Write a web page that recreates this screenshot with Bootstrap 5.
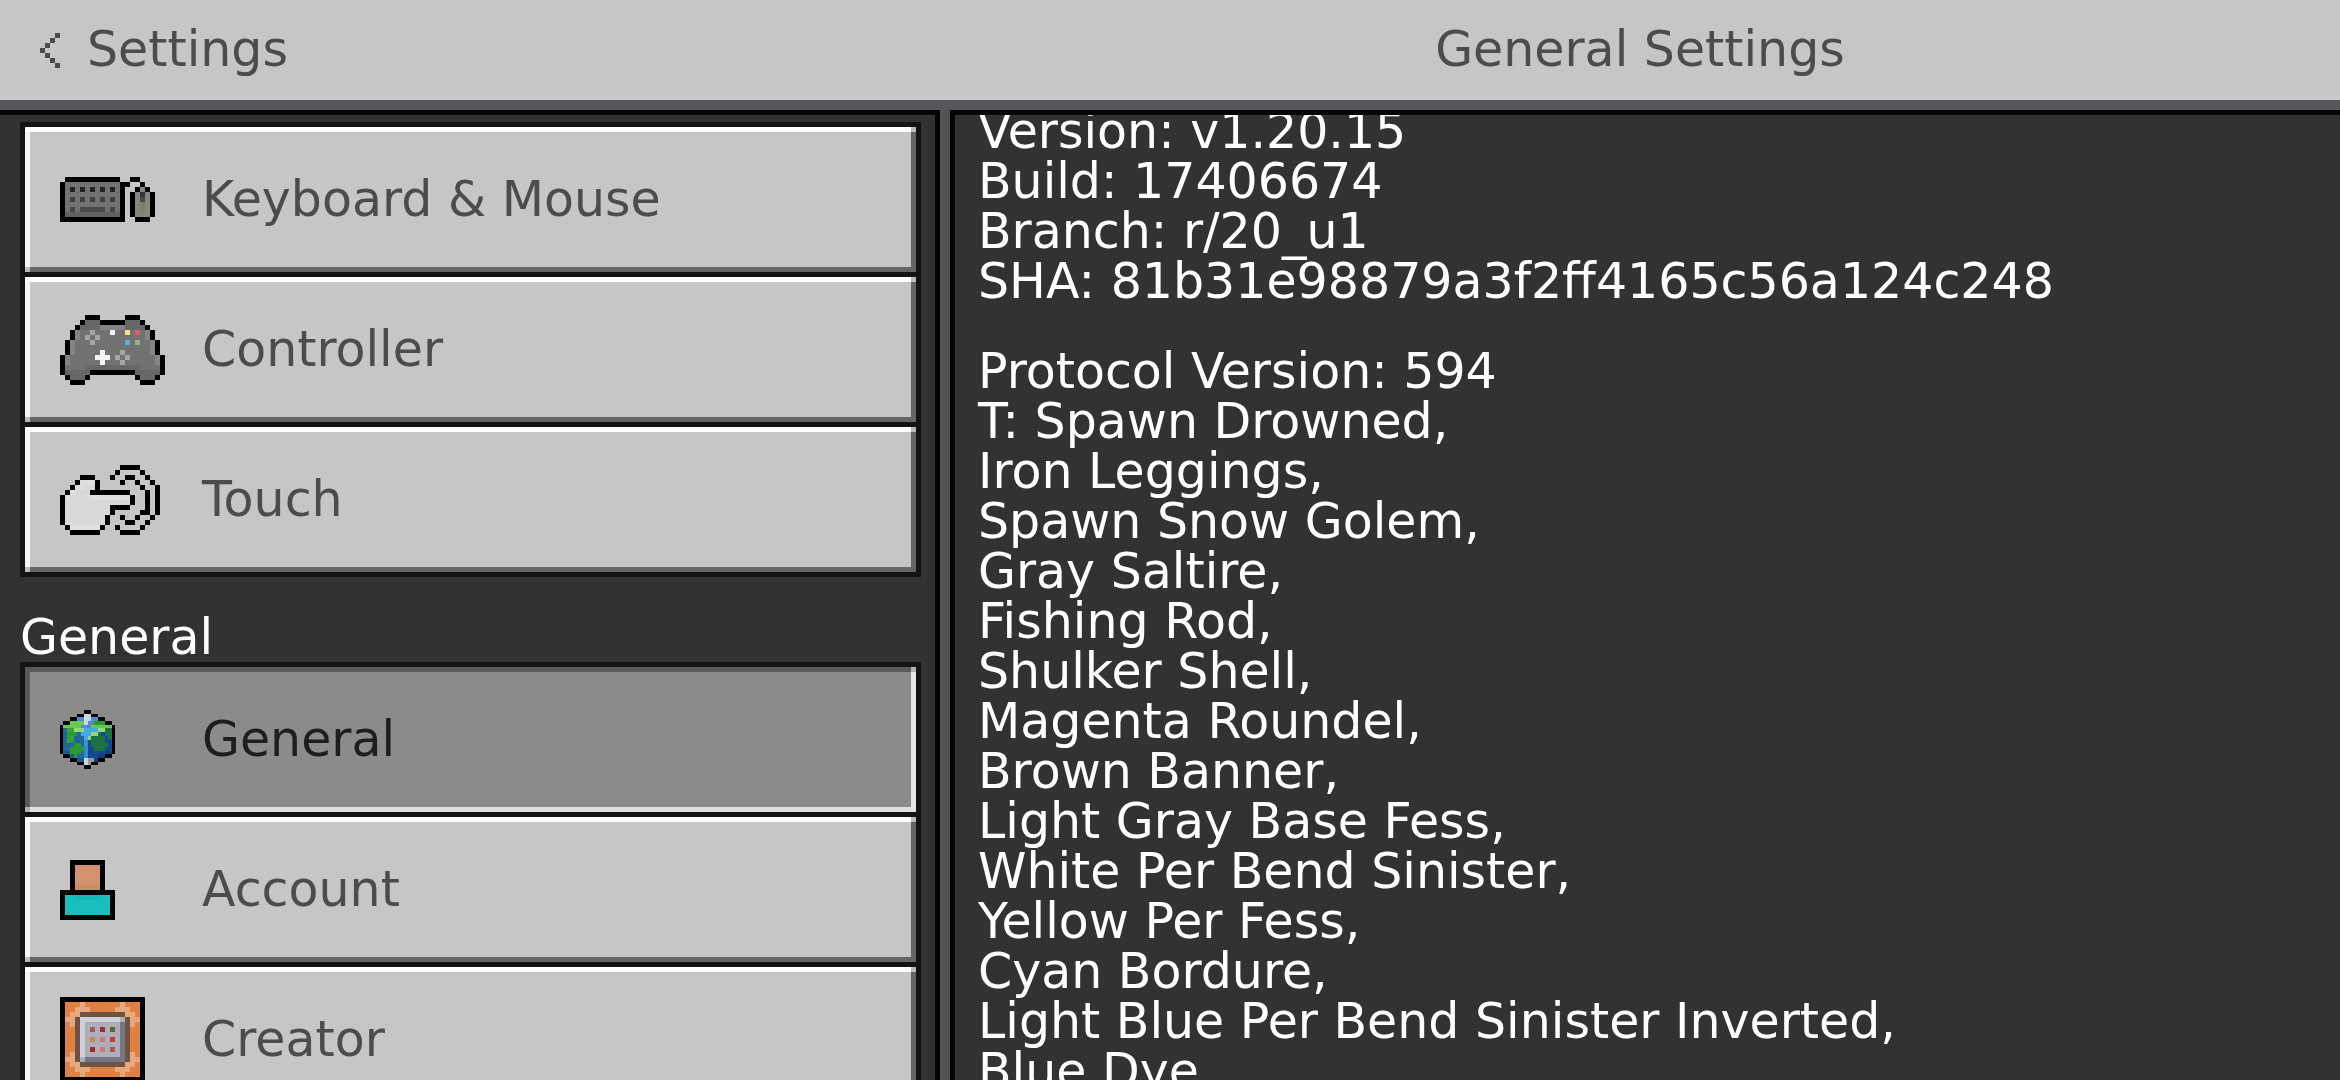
<!DOCTYPE html>
<html lang="en" class="h-100">
<head>
<meta charset="utf-8">
<meta name="viewport" content="width=device-width, initial-scale=1">
<title>General Settings</title>
<link href="https://cdn.jsdelivr.net/npm/bootstrap@5.3.0/dist/css/bootstrap.min.css" rel="stylesheet">
<style>
  body { font-family: "DejaVu Sans", sans-serif; font-size: 49px; line-height: 50px; background: #313233; color: #fff; }
  svg { display: block; shape-rendering: crispEdges; flex: none; }
  h1, h2, p { font: inherit; margin: 0; }
  .topbar { background: #c6c6c6; color: #4c4c4c; height: 110px; border-bottom: 10px solid #58565a; box-shadow: inset 0 -5px #c8c9ca; }
  .topbar a { color: inherit; padding-left: 40px; gap: 27px; }
  .side { width: 40.17%; }
  .nav-pane { border: solid #040405; border-width: 5px 5px 0 0; padding: 7px 14px 0 20px; }
  .info-pane { border: solid #040405; border-width: 5px 0 0 5px; margin-left: 10px; padding-left: 23px; min-width: 0; }
  .panes { background: #525254; }
  .nav-pane, .info-pane { background-color: #313233; }
  .menu-list { background: #131313; padding: 5px; gap: 5px; }
  .group-title { margin-top: 36px; margin-bottom: -1px; }
  .menu-btn {
    --face: #c6c6c6; --top: #fff; --left: #f7f7f7; --low: #656565; --right: #656565; --corner: #bababa;
    height: 145px; padding: 0 35px; border: 0; border-radius: 0; color: #4c4c4c; text-align: left;
    background:
      linear-gradient(var(--corner), var(--corner)) 0 100% / 5px 5px no-repeat,
      linear-gradient(var(--corner), var(--corner)) 100% 0 / 5px 5px no-repeat,
      linear-gradient(var(--top), var(--top)) 0 0 / 100% 5px no-repeat,
      linear-gradient(var(--low), var(--low)) 0 100% / 100% 5px no-repeat,
      linear-gradient(var(--left), var(--left)) 0 0 / 5px 100% no-repeat,
      linear-gradient(var(--right), var(--right)) 100% 0 / 5px 100% no-repeat,
      var(--face);
  }
  .menu-btn.active { --face: #8b8b8b; --top: #5a5a5a; --left: #5a5a5a; --low: #e0e0e0; --right: #e6e6e6; --corner: #b0b0b0; color: #1e1e1e; }
  .icon-slot { width: 142px; flex: none; }
  .scrolled { margin-top: -8px; white-space: nowrap; }
  .scrolled p + p { margin-top: 40px; }
</style>
<script src="https://cdn.jsdelivr.net/npm/bootstrap@5.3.0/dist/js/bootstrap.bundle.min.js"></script>
</head>
<body class="vh-100 overflow-hidden d-flex flex-column">
<header class="topbar d-flex align-items-stretch flex-shrink-0">
  <div class="side d-flex align-items-center flex-shrink-0">
    <a href="#" class="d-flex align-items-center text-decoration-none">
      <svg width="20" height="35" viewBox="0 0 4 7" fill="none" stroke="#4c4c4c" aria-hidden="true"><path d="M3 .5h1M2 1.5h1M1 2.5h1M0 3.5h1M1 4.5h1M2 5.5h1M3 6.5h1"/></svg>
      <span>Settings</span>
    </a>
  </div>
  <h1 class="flex-grow-1 align-self-center text-center">General Settings</h1>
</header>
<main class="panes d-flex flex-grow-1 overflow-hidden">
  <nav class="side nav-pane flex-shrink-0 overflow-hidden">
    <div class="menu-list d-flex flex-column">
      <button type="button" class="menu-btn d-flex align-items-center">
        <span class="icon-slot"><svg width="95" height="45" viewBox="0 0 19 9" fill="none" aria-hidden="true">
          <path fill="#727272" d="M1 1h11v6H1z"/><path fill="#616161" d="M1 7h11v1H1z"/>
          <path fill="#87857f" d="M16 2h1v1h1v5h-3V3h1z"/>
          <path stroke="#000" d="M1 .5h11M14 .5h2M0 1.5h1M12 1.5h2M16 1.5h1M15 2.5h1M17 2.5h1M.5 2v6M12.5 2v6M0 8.5h13M14.5 3v5M18.5 3v5M15 8.5h3"/>
          <path stroke="#242424" d="M2 2.5h1M4 2.5h1M6 2.5h1M8 2.5h1M10 2.5h1"/>
          <path stroke="#404040" d="M2 4.5h1M4 4.5h1M6 4.5h1M8 4.5h1M10 4.5h1"/>
          <path stroke="#484848" d="M2 6.5h1M4 6.5h5M10 6.5h1M16 4.5h1"/>
          <path stroke="#333" d="M16 3.5h1"/><path stroke="#7e7c77" d="M16.5 5v2"/>
        </svg></span>
        <span>Keyboard &amp; Mouse</span>
      </button>
      <button type="button" class="menu-btn d-flex align-items-center">
        <span class="icon-slot"><svg width="105" height="70" viewBox="0 0 21 14" fill="none" aria-hidden="true">
          <path stroke="#727272" d="M4 2.5h13M3 3.5h15M3 4.5h15M2 5.5h17M2 6.5h17M2 7.5h17M1 8.5h19M1 9.5h19M1 10.5h19"/>
          <path stroke="#676767" d="M5 1.5h3M13 1.5h3M4 2.5h4M13 2.5h4M5 10.5h11M1 11.5h5M15 11.5h5M2 12.5h3M16 12.5h3"/>
          <path stroke="#848484" d="M8 2.5h5M3 3.5h1M17 3.5h1M3 4.5h1M17 4.5h1M2 5.5h1M18 5.5h1M2 6.5h1M18 6.5h1M2 7.5h1M18 7.5h1M1 8.5h1M19 8.5h1M1 9.5h1M19 9.5h1"/>
          <path stroke="#000" d="M5 .5h3M13 .5h3M4 1.5h1M8 1.5h5M16 1.5h1M3 2.5h1M17 2.5h1M2.5 3v2M18.5 3v2M1.5 5v3M19.5 5v3M.5 8v4M20.5 8v4M6 11.5h9M1 12.5h1M5 12.5h1M15 12.5h1M19 12.5h1M2 13.5h3M16 13.5h3"/>
          <path stroke="#a5a5a7" d="M6 3.5h1M5 4.5h1M7 4.5h1M6 5.5h1M12 7.5h1M11 8.5h1M13 8.5h1M12 9.5h1"/>
          <path stroke="#f4f4f4" d="M10 3.5h1M8 7.5h1M7 8.5h3M8 9.5h1"/>
          <path stroke="#efe590" d="M13 3.5h1"/><path stroke="#e05a70" d="M15 3.5h1"/>
          <path stroke="#58aee0" d="M13 5.5h1"/><path stroke="#90b580" d="M15 5.5h1"/>
        </svg></span>
        <span>Controller</span>
      </button>
      <button type="button" class="menu-btn d-flex align-items-center">
        <span class="icon-slot"><svg width="100" height="70" viewBox="0 0 20 14" fill="none" aria-hidden="true">
          <path fill="#d9d9d9" d="M4 3h3v3h7v2h-4v2H9v2H8v1H2v-1H1V6h1V5h1V4h1z"/>
          <path stroke="#e0e0e0" d="M4 3.5h3M3 4.5h2M2 5.5h1M1 6.5h1M6 6.5h8M2 12.5h6"/>
          <path stroke="#000" d="M12 .5h4M11 1.5h1M16 1.5h1M4 2.5h3M10 2.5h1M13 2.5h2M17 2.5h1M3 3.5h1M7 3.5h1M12 3.5h1M15 3.5h1M18 3.5h1M2 4.5h1M7 4.5h1M16 4.5h1M1 5.5h1M6 5.5h8M.5 6v6M14.5 6v2M17.5 5v5M19.5 4v6M10 8.5h4M10 9.5h1M16 9.5h1M9.5 10v2M12 10.5h1M15 10.5h1M18 10.5h1M13 11.5h2M17 11.5h1M1 12.5h1M8 12.5h1M11 12.5h1M16 12.5h1M2 13.5h6M12 13.5h4"/>
        </svg></span>
        <span>Touch</span>
      </button>
    </div>
    <h2 class="group-title">General</h2>
    <div class="menu-list d-flex flex-column">
      <button type="button" class="menu-btn active d-flex align-items-center" aria-current="page">
        <span class="icon-slot"><svg width="55" height="59" viewBox="0 0 16 16" preserveAspectRatio="none" fill="none" aria-hidden="true">
          <path fill="#23659a" d="M1 4h7v11H5v-1H3v-1H1z"/><path fill="#124a91" d="M8 4h7v9h-2v1h-2v1H8z"/>
          <path stroke="#5687cf" d="M5 2.5h6M7 3.5h3M6 4.5h3"/>
          <path stroke="#68c951" d="M3 3.5h4M1 4.5h5M9 4.5h6M2 5.5h2"/>
          <path stroke="#299a30" d="M10 3.5h3M2 6.5h3M2 7.5h2M3 8.5h1M4 9.5h2M3 10.5h4M3 11.5h3M4 12.5h1"/>
          <path stroke="#3aa33b" d="M2 5.5h3M3 7.5h1M2 8.5h1"/>
          <path stroke="#95d575" d="M4 5.5h3M11 5.5h2M9 6.5h2M8 7.5h1"/>
          <path stroke="#42a9e2" d="M7 5.5h4M6 6.5h3M7 7.5h1"/>
          <path stroke="#328dca" d="M7.5 8v5"/>
          <path stroke="#1d7143" d="M13 5.5h2M11 6.5h1M13 6.5h2M9 7.5h4M14 7.5h1M9 8.5h4M9 9.5h4M10 10.5h2M13 9.5h1M12 10.5h1"/>
          <path stroke="#195d83" d="M1 11.5h2M1 12.5h3M5 13.5h2"/><path stroke="#103f79" d="M13 11.5h2M11 12.5h2M10 13.5h1"/>
          <path stroke="#c5dadd" d="M7 1.5h2M7 2.5h2M7 3.5h1M7 13.5h1M7 14.5h1"/>
          <path stroke="#999" d="M8 13.5h2M8 14.5h1"/>
          <path stroke="#000" d="M7 .5h2M5 1.5h2M9 1.5h2M3 2.5h2M11 2.5h2M1 3.5h2M13 3.5h2M.5 4v8M15.5 4v8M1 12.5h2M13 12.5h2M3 13.5h2M11 13.5h2M5 14.5h2M9 14.5h2M7 15.5h2"/>
        </svg></span>
        <span>General</span>
      </button>
      <button type="button" class="menu-btn d-flex align-items-center">
        <span class="icon-slot"><svg width="55" height="60" viewBox="0 0 11 12" aria-hidden="true">
          <path d="M2 0h7v6h2v6H0V6h2z"/><path fill="#d3926f" d="M3 1h5v4H3z"/><path fill="#cd8c67" d="M3 5h5v1H3z"/>
          <path fill="#17c0bd" d="M1 7h9v4H1z"/><path fill="#14b8b5" d="M3 7h5v1H3z"/>
        </svg></span>
        <span>Account</span>
      </button>
      <button type="button" class="menu-btn d-flex align-items-center">
        <span class="icon-slot"><svg width="85" height="85" viewBox="0 0 17 17" fill="none" aria-hidden="true">
          <path fill="#000" d="M0 0h17v17H0z"/><path fill="#df8142" d="M1 1h15v15H1z"/>
          <path stroke="#e9a77e" d="M4 1.5h1M12 1.5h1M3 2.5h3M11 2.5h3M2 3.5h2M13 3.5h2M1 4.5h2M14 4.5h2M2 5.5h1M14 5.5h1M2 11.5h1M14 11.5h1M1 12.5h2M14 12.5h2M2 13.5h2M13 13.5h2M3 14.5h3M11 14.5h3M4 15.5h1M12 15.5h1"/>
          <path fill="#6f523f" d="M4 3h9v1h1v9h-1v1H4v-1H3V4h1z"/>
          <path fill="#afadb8" d="M4 4h9v9H4z"/><path fill="#d2d0dc" d="M4 4h8v1H5v7H4z"/><path fill="#757687" d="M12 5h1v8H5v-1h7z"/>
          <path stroke="#a75757" d="M6 6.5h1M10 10.5h1"/><path stroke="#9e2e30" d="M8 6.5h1M6 10.5h1"/><path stroke="#4f6d2e" d="M10 6.5h1"/>
          <path stroke="#be8d42" d="M6 8.5h1"/><path stroke="#ca7a7a" d="M8 8.5h1M8 10.5h1"/><path stroke="#c63b37" d="M10 8.5h1"/>
        </svg></span>
        <span>Creator</span>
      </button>
    </div>
  </nav>
  <section class="info-pane flex-grow-1 overflow-hidden">
    <div class="scrolled">
      <p>Version: v1.20.15<br>Build: 17406674<br>Branch: r/20_u1<br>SHA: 81b31e98879a3f2ff4165c56a124c248</p>
      <p>Protocol Version: 594<br>T: Spawn Drowned,<br>Iron Leggings,<br>Spawn Snow Golem,<br>Gray Saltire,<br>Fishing Rod,<br>Shulker Shell,<br>Magenta Roundel,<br>Brown Banner,<br>Light Gray Base Fess,<br>White Per Bend Sinister,<br>Yellow Per Fess,<br>Cyan Bordure,<br>Light Blue Per Bend Sinister Inverted,<br>Blue Dye,</p>
    </div>
  </section>
</main>
</body>
</html>
